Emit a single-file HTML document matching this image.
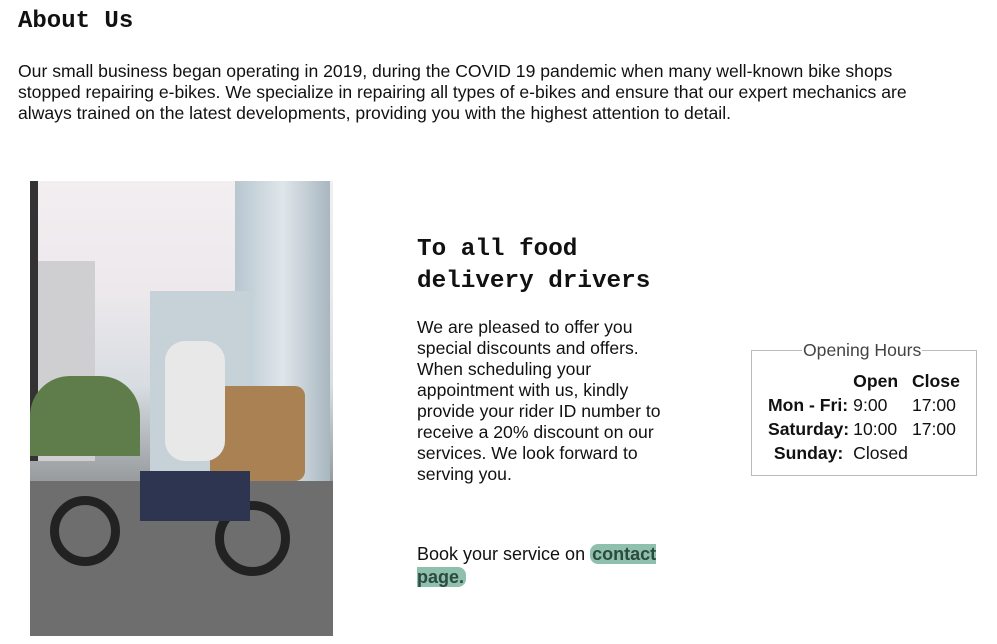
<!DOCTYPE html>
<html><head><style>
body{margin:0;width:997px;height:644px;overflow:hidden;background:#fff;font-family:"Liberation Sans",sans-serif;color:#111;position:relative}
h1{position:absolute;left:18px;top:8px;margin:0;font:bold 24px "Liberation Mono",monospace}
.intro{position:absolute;left:18px;top:61px;width:920px;font-size:17.6px;line-height:21px;margin:0}
.photo{position:absolute;left:30px;top:181px;width:303px;height:455px;overflow:hidden;
background:linear-gradient(180deg,#f3eef0 0%,#ece8ec 25%,#d8dde2 45%,#a9aeb2 60%,#7d7f80 75%,#6b6d6f 100%)}
h2{position:absolute;left:417px;top:234px;margin:0;font:bold 24.3px/32px "Liberation Mono",monospace}
.p2{position:absolute;left:417px;top:317px;width:255px;font-size:17.6px;line-height:21px;margin:0}
.p3{position:absolute;left:417px;top:543px;width:255px;font-size:18px;line-height:23px;margin:0}
.hl{background:#8fbfad;color:#2c4a40;font-weight:bold;border-radius:8px;padding:0 2px}
fieldset{position:absolute;left:751px;top:340px;width:200px;height:134px;border:1px solid #bbb;margin:0;padding:0 12px;box-sizing:content-box}
legend{color:#444;font-size:17.6px;padding:0 1px;margin-left:38px}
table{border-collapse:collapse;font-size:17.6px;margin-left:2px;margin-top:8px}
td,th{padding:0 2px;line-height:24px;text-align:left}
th{font-weight:bold}
</style></head><body>
<h1>About Us</h1>
<p class="intro">Our small business began operating in 2019, during the COVID 19 pandemic when many well-known bike shops stopped repairing e-bikes. We specialize in repairing all types of e-bikes and ensure that our expert mechanics are always trained on the latest developments, providing you with the highest attention to detail.</p>
<div class="photo">
<div style="position:absolute;left:205px;top:0;width:95px;height:300px;background:linear-gradient(90deg,#b7c6d0,#dfe6ea,#a8b6c0)"></div>
<div style="position:absolute;left:120px;top:110px;width:100px;height:200px;background:#c7d1d8"></div>
<div style="position:absolute;left:5px;top:80px;width:60px;height:200px;background:#cfcfd2"></div>
<div style="position:absolute;left:0;top:0;width:8px;height:280px;background:#333"></div>
<div style="position:absolute;left:0;top:195px;width:110px;height:80px;background:#5f7d4a;border-radius:40px 40px 0 0"></div>
<div style="position:absolute;left:0;top:300px;width:303px;height:155px;background:#6e6e6e"></div>
<div style="position:absolute;left:180px;top:205px;width:95px;height:95px;background:#a98152;border-radius:10px"></div>
<div style="position:absolute;left:135px;top:160px;width:60px;height:120px;background:#e8e8e8;border-radius:20px"></div>
<div style="position:absolute;left:20px;top:315px;width:70px;height:70px;border:9px solid #222;border-radius:50%;box-sizing:border-box"></div>
<div style="position:absolute;left:185px;top:320px;width:75px;height:75px;border:9px solid #222;border-radius:50%;box-sizing:border-box"></div>
<div style="position:absolute;left:110px;top:290px;width:110px;height:50px;background:#2d3550"></div>
</div>
<h2>To all food<br>delivery drivers</h2>
<p class="p2">We are pleased to offer you special discounts and offers. When scheduling your appointment with us, kindly provide your rider ID number to receive a 20% discount on our services. We look forward to serving you.</p>
<p class="p3">Book your service on <span class="hl">contact page.</span></p>
<fieldset><legend>Opening Hours</legend>
<table>
<tr><th></th><th>Open</th><th>Close</th></tr>
<tr><th>Mon - Fri:</th><td>9:00</td><td>17:00</td></tr>
<tr><th>Saturday:</th><td>10:00</td><td>17:00</td></tr>
<tr><th style="text-align:center">Sunday:</th><td>Closed</td><td></td></tr>
</table></fieldset>
</body></html>
